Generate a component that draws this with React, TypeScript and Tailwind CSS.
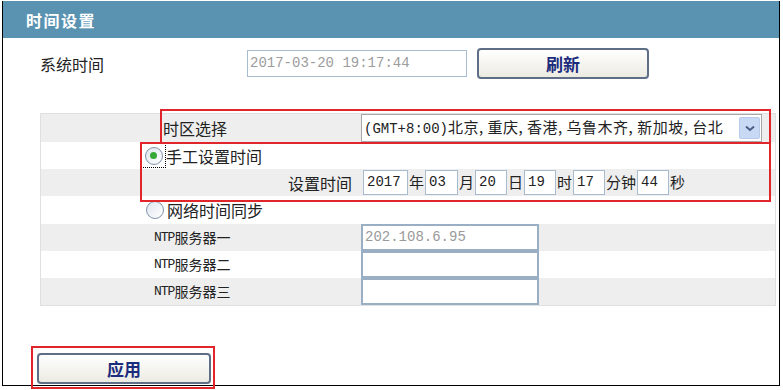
import React from 'react';

const cjk = "font-['SimSun','Noto_Sans_CJK_SC',sans-serif]";
const mono = "font-['Liberation_Mono','Noto_Sans_CJK_SC',monospace]";

function Radio({ checked }: { checked?: boolean }) {
  return (
    <span className="flex h-[18px] w-[18px] items-center justify-center rounded-full border border-[#7f93ab] bg-gradient-to-br from-[#dfe6ee] to-white">
      {checked && <span className="h-[7px] w-[7px] rounded-full bg-[#36a836]" />}
    </span>
  );
}

function Btn({ label, className }: { label: string; className: string }) {
  return (
    <button
      className={`flex items-center justify-center rounded-[4px] border-2 border-[#5d6e86] bg-gradient-to-b from-white to-[#ecebe2] text-[17px] font-bold text-[#1c2c7c] ${cjk} ${className}`}
    >
      {label}
    </button>
  );
}

function TimeBox({ value, w = 'w-[32px]' }: { value: string; w?: string }) {
  return (
    <span className={`flex h-[25px] ${w} items-center border border-[#a9bccd] bg-white pl-[3px] text-[14px] text-[#222] ${mono}`}>
      {value}
    </span>
  );
}

function Unit({ t }: { t: string }) {
  return <span className="px-[1px] text-[15px] text-[#222]">{t}</span>;
}

function NtpBox({ value }: { value?: string }) {
  return (
    <span className={`flex h-full w-[178px] items-center border-2 border-[#9aaec4] bg-white pl-[2px] text-[14px] text-[#9a9a9a] ${mono}`}>
      {value}
    </span>
  );
}

export default function App() {
  return (
    <div className={`relative h-[390px] w-[783px] bg-white ${cjk} text-[15px] text-[#222]`}>
      <div className="ml-[2px] mt-[1px] flex h-[385px] w-[778px] flex-col border border-black border-t-0">
        {/* header */}
        <div className="flex h-[37px] items-center bg-[#5a93b1] pl-[23px] text-[16px] font-bold tracking-[1.5px] text-white">
          时间设置
        </div>

        {/* system time */}
        <div className="mt-[10px] flex h-[31px] items-center">
          <span className="ml-[37px] w-[207px] text-[16px]">系统时间</span>
          <span className={`flex h-[27px] w-[220px] items-center border border-[#a9bccd] bg-white pl-[2px] text-[14px] text-[#9c9c9c] ${mono}`}>
            2017-03-20 19:17:44
          </span>
          <Btn label="刷新" className="ml-[10px] h-[31px] w-[172px]" />
        </div>

        {/* table */}
        <div className="ml-[37px] mt-[34px] w-[736px] border border-[#e0e0e0]">
          <div className="grid h-[28px] grid-cols-[100px_220px_1fr] bg-[#eeeeee]">
            <span />
            <span className="flex items-center pl-[22px] text-[16px]">时区选择</span>
            <span className="flex items-center">
              <span className="flex h-[28px] w-[401px] items-center justify-between border border-[#a8a8a8] bg-white pl-[2px] pr-[1px]">
                <span className="whitespace-nowrap text-[15px] tracking-[0.5px]">
                  <span className={`${mono} text-[14px] tracking-normal`}>(GMT+8:00)</span>北京, 重庆, 香港, 乌鲁木齐, 新加坡, 台北
                </span>
                <span className="flex h-[22px] w-[21px] items-center justify-center rounded-[2px] border border-[#b8cbe8] bg-[#c7d9f4]">
                  <svg width="10" height="7" viewBox="0 0 10 7">
                    <path d="M1 1.5 L5 5 L9 1.5" fill="none" stroke="#4a5f86" strokeWidth="2" />
                  </svg>
                </span>
              </span>
            </span>
          </div>

          <div className="grid h-[27px] grid-cols-[100px_220px_1fr] bg-white">
            <span />
            <span className="flex items-center">
              <span className="flex h-[25px] w-[25px] items-center justify-center border border-dotted border-black">
                <Radio checked />
              </span>
              <span className="text-[16px]">手工设置时间</span>
            </span>
            <span />
          </div>

          <div className="grid h-[27px] grid-cols-[100px_220px_1fr] bg-[#eeeeee]">
            <span />
            <span className="flex items-center justify-end pr-[9px] text-[16px]">设置时间</span>
            <span className="flex items-center pl-[2px]">
              <TimeBox value="2017" w="w-[45px]" />
              <Unit t="年" />
              <TimeBox value="03" w="w-[33px]" />
              <Unit t="月" />
              <TimeBox value="20" />
              <Unit t="日" />
              <TimeBox value="19" />
              <Unit t="时" />
              <TimeBox value="17" />
              <Unit t="分钟" />
              <TimeBox value="44" />
              <Unit t="秒" />
            </span>
          </div>

          <div className="grid h-[28px] grid-cols-[100px_220px_1fr] bg-white">
            <span />
            <span className="flex items-center gap-[3px] pl-[5px]">
              <Radio />
              <span className="text-[16px]">网络时间同步</span>
            </span>
            <span />
          </div>

          {['NTP服务器一', 'NTP服务器二', 'NTP服务器三'].map((n, i) => (
            <div
              key={n}
              className={`grid h-[27px] grid-cols-[100px_220px_1fr] ${i === 1 ? 'bg-white' : 'bg-[#eeeeee]'}`}
            >
              <span />
              <span className="flex items-center pl-[13px] text-[14px]">
                <span className={`${mono} text-[13px] tracking-[-1px]`}>NTP</span>
                {n.slice(3)}
              </span>
              <span className="flex items-stretch bg-white">
                <NtpBox value={i === 0 ? '202.108.6.95' : undefined} />
                <span className={`flex-1 ${i === 1 ? 'bg-white' : 'bg-[#eeeeee]'}`} />
              </span>
            </div>
          ))}
        </div>

        <Btn label="应用" className="ml-[34px] mt-[47px] h-[31px] w-[174px]" />
      </div>

      {/* red annotation boxes */}
      <div className="pointer-events-none absolute left-[160px] top-[108px] h-[35px] w-[611px] border-2 border-[#e0262a]" />
      <div className="pointer-events-none absolute left-[140px] top-[141px] h-[60px] w-[631px] border-2 border-[#e0262a]" />
      <div className="pointer-events-none absolute left-[31px] top-[345px] h-[43px] w-[184px] border-2 border-[#e0262a]" />
    </div>
  );
}
